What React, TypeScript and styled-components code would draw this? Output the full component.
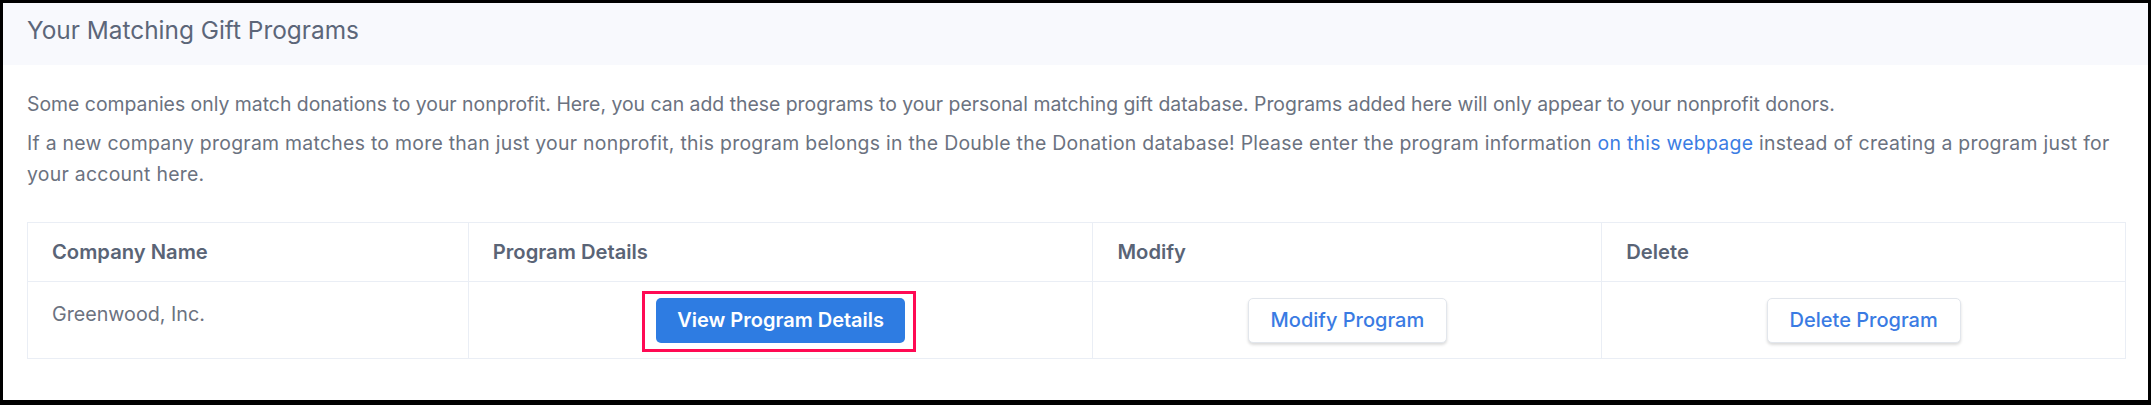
import React from 'react';
import styled, { createGlobalStyle } from 'styled-components';

const GlobalStyle = createGlobalStyle`
  html, body {
    margin: 0;
    padding: 0;
    background: #000;
  }
  body {
    font-family: Inter, "Noto Sans", sans-serif;
  }
`;

type Program = {
  company: string;
};

const programs: Program[] = [{ company: 'Greenwood, Inc.' }];

const App: React.FC = () => {
  return (
    <>
      <GlobalStyle />
      <Frame>
        <Card>
          <CardHeader>
            <Title>Your Matching Gift Programs</Title>
          </CardHeader>
          <CardBody>
            <Text>
              Some companies only match donations to your nonprofit. Here, you can add these programs to your
              personal matching gift database. Programs added here will only appear to your nonprofit donors.
            </Text>
            <Text $spacing={0.28}>
              If a new company program matches to more than just your nonprofit, this program belongs in the Double
              the Donation database! Please enter the program information <Link href="#">on this webpage</Link>{' '}
              instead of creating a program just for your account here.
            </Text>

            <Table>
              <HeadCell>Company Name</HeadCell>
              <HeadCell>Program Details</HeadCell>
              <HeadCell>Modify</HeadCell>
              <HeadCell>Delete</HeadCell>

              {programs.map((p) => (
                <React.Fragment key={p.company}>
                  <Cell>{p.company}</Cell>
                  <ActionCell>
                    <Highlight>
                      <PrimaryButton>View Program Details</PrimaryButton>
                    </Highlight>
                  </ActionCell>
                  <ActionCell>
                    <OutlineButton>Modify Program</OutlineButton>
                  </ActionCell>
                  <ActionCell>
                    <OutlineButton>Delete Program</OutlineButton>
                  </ActionCell>
                </React.Fragment>
              ))}
            </Table>
          </CardBody>
        </Card>
      </Frame>
    </>
  );
};

export default App;

// Styled Components
const Frame = styled.div`
  padding: 3px 3px 5px 3px;
  height: 405px;
  box-sizing: border-box;
`;

const Card = styled.div`
  background: #fff;
  height: 100%;
`;

const CardHeader = styled.div`
  background: #f8f9fd;
  padding: 12px 24px 20px;
`;

const Title = styled.h2`
  margin: 0;
  font-size: 24.4px;
  line-height: 30px;
  font-weight: 400;
  color: #5c6679;
`;

const CardBody = styled.div`
  padding: 24px 22px 0 24px;
`;

const Text = styled.p<{ $spacing?: number }>`
  margin: 0 0 8px;
  font-size: 19.4px;
  line-height: 31px;
  letter-spacing: ${(p) => p.$spacing ?? 0}px;
  color: #6b7280;
`;

const Link = styled.a`
  color: #3b7de3;
  text-decoration: none;
`;

const Table = styled.div`
  display: grid;
  grid-template-columns: 441fr 625fr 509fr 524fr;
  grid-template-rows: 59px 77px;
  margin-top: 32px;
  border-top: 1px solid #eaeef5;
  border-left: 1px solid #eaeef5;
`;

const HeadCell = styled.div`
  box-sizing: border-box;
  padding: 14px 24px 0;
  font-size: 20.2px;
  line-height: 30px;
  font-weight: 600;
  color: #5a6476;
  border-right: 1px solid #eaeef5;
  border-bottom: 1px solid #eaeef5;
`;

const Cell = styled.div`
  box-sizing: border-box;
  padding: 17px 24px 0;
  font-size: 19.7px;
  line-height: 30px;
  color: #6b7280;
  border-right: 1px solid #eaeef5;
  border-bottom: 1px solid #eaeef5;
`;

const ActionCell = styled.div`
  display: flex;
  align-items: center;
  justify-content: center;
  border-right: 1px solid #eaeef5;
  border-bottom: 1px solid #eaeef5;
`;

// red annotation box drawn over the button
const Highlight = styled.span`
  position: relative;
  display: inline-flex;

  &::after {
    content: '';
    position: absolute;
    top: -7px;
    right: -11px;
    bottom: -9px;
    left: -14px;
    border: 3px solid #ff0a54;
    pointer-events: none;
  }
`;

const BaseButton = styled.button`
  height: 45px;
  font-family: Inter, "Noto Sans", sans-serif;
  font-size: 20px;
  border-radius: 5px;
  cursor: pointer;
  white-space: nowrap;
`;

const PrimaryButton = styled(BaseButton)`
  padding: 0 21px;
  background: #2e7ce2;
  color: #fff;
  font-weight: 600;
  border: none;
`;

const OutlineButton = styled(BaseButton)`
  padding: 0 22px;
  background: #fff;
  color: #3a7be3;
  font-weight: 500;
  border: 1px solid #e2e6ec;
  box-shadow: 0 2px 3px rgba(0, 0, 0, 0.14);
`;
